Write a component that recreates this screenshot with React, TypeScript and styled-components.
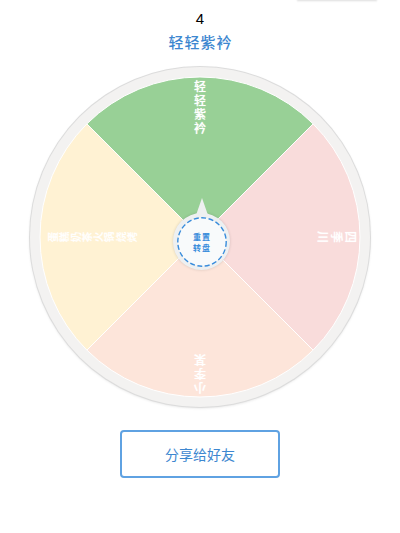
import React from 'react'
import styled, { createGlobalStyle } from 'styled-components'

const GlobalStyle = createGlobalStyle`
  html, body {
    margin: 0;
    padding: 0;
    background: #ffffff;
    font-family: "Noto Sans CJK SC", "Liberation Sans", sans-serif;
  }
`;

const Page = styled.div`
  position: relative;
  width: 400px;
  height: 533px;
  overflow: hidden;
  display: flex;
  flex-direction: column;
  align-items: center;
  padding-top: 10px;
  box-sizing: border-box;
`;

const TopEdge = styled.div`
  position: absolute;
  top: -1px;
  right: 23px;
  width: 80px;
  height: 1px;
  box-shadow: 0 1px 2px rgba(0, 0, 0, 0.2);
`;

const Count = styled.div`
  font-family: "Liberation Sans", sans-serif;
  font-size: 15px;
  line-height: 17px;
  color: #000000;
`;

const Title = styled.div`
  margin-top: 5px;
  font-size: 15px;
  font-weight: 500;
  line-height: 20px;
  letter-spacing: 1px;
  padding-left: 1px;
  color: #3d87d0;
`;

const Wheel = styled.div`
  position: relative;
  margin-top: 15px;
  width: 340px;
  height: 340px;
  flex-shrink: 0;
  border-radius: 50%;
  background: #f3f2f1;
  box-shadow: 0 0 0 1px #dcdcdc, 0 1px 3px rgba(0, 0, 0, 0.15);
`;

const Plate = styled.svg`
  position: absolute;
  inset: 0;
  width: 340px;
  height: 340px;
`;

const Label = styled.div<{ $angle: number; $pitch: number; $size: number; $inset: number }>`
  position: absolute;
  left: 163px;
  top: ${props => props.$inset}px;
  width: 14px;
  height: 170px;
  transform-origin: 7px ${props => 170 - props.$inset}px;
  transform: rotate(${props => props.$angle}deg);
  color: #ffffff;
  font-size: ${props => props.$size}px;
  font-weight: 500;
  line-height: ${props => props.$pitch}px;
  text-align: center;
  word-break: break-all;
  text-shadow: 0 0 1px rgba(255, 255, 255, 0.7);
`;

const Hub = styled.div`
  position: absolute;
  left: 143px;
  top: 146px;
  width: 57px;
  height: 57px;
  border-radius: 50%;
  background: #eef0f1;
  box-shadow: 0 0 3px rgba(0, 0, 0, 0.15);
  display: flex;
  align-items: center;
  justify-content: center;
`;

const Pointer = styled.div`
  position: absolute;
  left: 21.5px;
  top: -15px;
  width: 0;
  height: 0;
  border-left: 7px solid transparent;
  border-right: 7px solid transparent;
  border-bottom: 20px solid #eef0f1;
`;

const HubRing = styled.svg`
  position: absolute;
  left: 3.5px;
  top: 3.5px;
  width: 50px;
  height: 50px;
`;

const HubText = styled.div`
  position: relative;
  color: #3a8ddc;
  font-size: 8px;
  font-weight: 700;
  line-height: 11px;
  letter-spacing: 1px;
  padding-left: 1px;
  text-align: center;
`;

const ShareButton = styled.button`
  margin-top: 23px;
  width: 160px;
  height: 48px;
  flex-shrink: 0;
  box-sizing: border-box;
  background: #ffffff;
  border: 2px solid #5fa2e2;
  border-radius: 4px;
  color: #3d87d0;
  font-family: inherit;
  font-size: 14px;
  font-weight: 400;
`;

const wedges = [
  { color: '#98d096', from: -45 },
  { color: '#f9dcdb', from: 45 },
  { color: '#fde5da', from: 135 },
  { color: '#fff2d3', from: 225 },
]

const labels = [
  { text: '轻轻紫衿', angle: 0, pitch: 14, size: 12, inset: 12 },
  { text: '四季川', angle: 90, pitch: 14, size: 12, inset: 12 },
  { text: '小李某', angle: 180, pitch: 14, size: 12, inset: 12 },
  { text: '蛋糕奶茶火锅烧烤', angle: 270, pitch: 11.3, size: 10.5, inset: 17 },
]

// wedge outline on the 340 plate, angle 0 points up
const wedgePath = (from: number) => {
  const r = 160
  const point = (deg: number) => {
    const rad = (deg * Math.PI) / 180
    return `${170 + r * Math.sin(rad)} ${170 - r * Math.cos(rad)}`
  }
  return `M170 170 L${point(from)} A${r} ${r} 0 0 1 ${point(from + 90)} Z`
}

const App = () => {
  return (
    <Page>
      <GlobalStyle />
      <TopEdge />
      <Count>4</Count>
      <Title>轻轻紫衿</Title>
      <Wheel>
        <Plate viewBox="0 0 340 340">
          {wedges.map(w => (
            <path key={w.from} d={wedgePath(w.from)} fill={w.color} stroke="#ffffff" strokeWidth="1" />
          ))}
        </Plate>
        {labels.map(l => (
          <Label key={l.angle} $angle={l.angle} $pitch={l.pitch} $size={l.size} $inset={l.inset}>{l.text}</Label>
        ))}
        <Hub>
          <Pointer />
          <HubRing viewBox="0 0 50 50">
            <circle cx="25" cy="25" r="24.2" fill="#f8fafb" stroke="#3a8ddc" strokeWidth="1.4" strokeDasharray="5 2.5" />
          </HubRing>
          <HubText>重置<br />转盘</HubText>
        </Hub>
      </Wheel>
      <ShareButton>分享给好友</ShareButton>
    </Page>
  );
}

export default App
